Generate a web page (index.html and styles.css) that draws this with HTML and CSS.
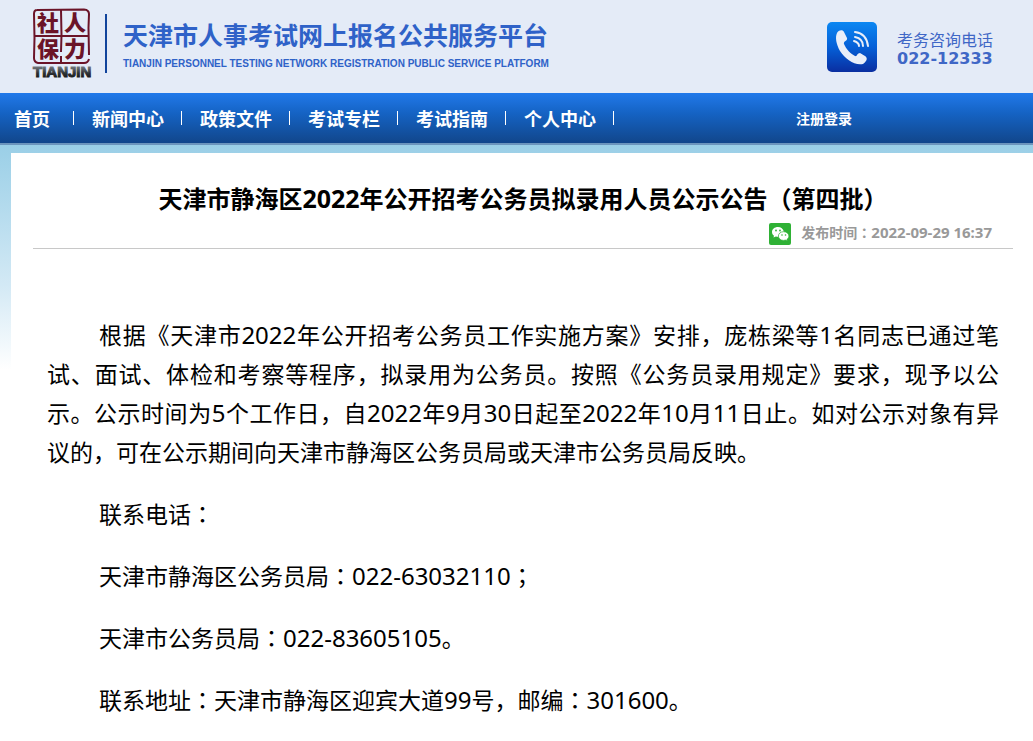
FILE: index.html
```html
<!DOCTYPE html>
<html lang="zh-CN">
<head>
  <meta charset="UTF-8">
  <meta name="viewport" content="width=device-width, initial-scale=1.0">
  <title>天津市人事考试网上报名公共服务平台</title>
  <link rel="stylesheet" href="styles.css">
</head>
<body>

  <!-- Header -->
  <header class="header">
    <svg class="logo" width="60" height="72" viewBox="0 0 60 72">
      <defs>
        <linearGradient id="ink" x1="0" y1="0" x2="0" y2="1">
          <stop offset="0" stop-color="#9a9fa6"/>
          <stop offset="0.6" stop-color="#2c3033"/>
          <stop offset="1" stop-color="#111"/>
        </linearGradient>
      </defs>
      <g fill="none" stroke="#6b1428" stroke-width="2">
        <path d="M5 2 L52 1.5 Q57 2 57 6 L56.5 20 L57 47 M57 51 Q56 55 52 55 L6 55 Q2 54 2 50 L2.5 30 L2 6 Q2 2 5 2"/>
        <path d="M29 2 L29.5 27 L29 44 M29 48 V55 M2 28 H57"/>
      </g>
      <g class="seal-text">
        <text x="5" y="23">社</text>
        <text x="32" y="23">人</text>
        <text x="5" y="49">保</text>
        <text x="32" y="49">力</text>
      </g>
      <text class="seal-name" x="1" y="69" fill="url(#ink)" stroke="url(#ink)">TIANJIN</text>
    </svg>
    <div class="site-name">
      <h1>天津市人事考试网上报名公共服务平台</h1>
      <p>TIANJIN PERSONNEL TESTING NETWORK REGISTRATION PUBLIC SERVICE PLATFORM</p>
    </div>
    <div class="hotline">
      <svg width="50" height="50" viewBox="0 0 50 50">
        <defs>
          <linearGradient id="tile" x1="0" y1="0" x2="0" y2="1">
            <stop offset="0" stop-color="#0b87f2"/>
            <stop offset="0.5" stop-color="#0560d8"/>
            <stop offset="1" stop-color="#0a2ea0"/>
          </linearGradient>
        </defs>
        <rect width="50" height="50" rx="5" fill="url(#tile)"/>
        <path d="M10 11 C11 8 16 7 17 10 L20 16 C21 19 16 19 17 22 C19 27 24 32 28 34 C30 35 30 31 33 31 L38 34 C41 36 40 39 36 42 C28 44 18 37 13 29 C9 22 8 15 10 11 Z" fill="#e9eef9"/>
        <g fill="none" stroke="#e9eef9" stroke-width="2" stroke-linecap="round">
          <path d="M28 10 C36 11 40 16 41 24"/>
          <path d="M28 15 C33 16 36 19 36 24"/>
          <path d="M27 19 C30 20 32 22 32 24"/>
        </g>
      </svg>
      <div class="hotline-text">
        <span>考务咨询电话</span>
        <strong>022-12333</strong>
      </div>
    </div>
  </header>

  <!-- Navigation -->
  <nav class="nav">
    <ul>
      <li class="home"><a href="#">首页</a></li>
      <li><a href="#">新闻中心</a></li>
      <li><a href="#">政策文件</a></li>
      <li><a href="#">考试专栏</a></li>
      <li><a href="#">考试指南</a></li>
      <li><a href="#">个人中心</a></li>
    </ul>
    <a class="login" href="#">注册登录</a>
  </nav>

  <!-- Article -->
  <div class="page">
    <main class="article">
      <div class="article-head">
        <h2>天津市静海区<span class="num">2022</span>年公开招考公务员拟录用人员公示公告（第四批）</h2>
        <div class="meta">
          <svg width="22" height="22" viewBox="0 0 22 22">
            <rect width="22" height="22" rx="2" fill="#2fb135"/>
            <path d="M9 4 C5.500 4 3 6.200 3 9 C3 10.600 3.800 11.900 5 12.800 L4.500 14.600 L6.800 13.600 L10 14 C14 13.500 15 11 14.800 8.500 C14.200 5.800 12 4 9 4 Z" fill="#fff"/>
            <path d="M14.500 8.700 C11.500 8.700 9.400 10.700 9.400 13 C9.400 15.400 11.600 17.400 14.500 17.400 L16.500 17.100 L18.300 18 L17.900 16.400 C19.200 15.600 19.900 14.400 19.900 13 C19.900 10.700 17.600 8.700 14.500 8.700 Z" fill="#fff" stroke="#2fb135" stroke-width="0.700"/>
            <g fill="#2fb135">
              <circle cx="7" cy="7.500" r="0.900"/>
              <circle cx="11" cy="7.500" r="0.900"/>
              <circle cx="13" cy="12" r="0.800"/>
              <circle cx="16.500" cy="12" r="0.800"/>
            </g>
          </svg>
          <span class="time">发布时间<span class="mark" lang="ja">：</span><span class="num">2022-09-29 16:37</span></span>
        </div>
      </div>
      <div class="article-body">
        <p>根据《天津市<span class="num">2022</span>年公开招考公务员工作实施方案》安排，庞栋梁等<span class="num">1</span>名同志已通过笔试、面试、体检和考察等程序，拟录用为公务员。按照《公务员录用规定》要求，现予以公示。公示时间为<span class="num">5</span>个工作日，自<span class="num">2022</span>年<span class="num">9</span>月<span class="num">30</span>日起至<span class="num">2022</span>年<span class="num">10</span>月<span class="num">11</span>日止。如对公示对象有异议的，可在公示期间向天津市静海区公务员局或天津市公务员局反映。</p>
        <p>联系电话<span class="mark" lang="ja">：</span></p>
        <p>天津市静海区公务员局<span class="mark" lang="ja">：</span><span class="num">022-63032110</span><span class="mark" lang="ja">；</span></p>
        <p>天津市公务员局<span class="mark" lang="ja">：</span><span class="num">022-83605105</span>。</p>
        <p>联系地址<span class="mark" lang="ja">：</span>天津市静海区迎宾大道<span class="num">99</span>号，邮编<span class="mark" lang="ja">：</span><span class="num">301600</span>。</p>
      </div>
    </main>
  </div>

</body>
</html>
```
FILE: styles.css
```css
* {
  box-sizing: border-box;
}

body {
  margin: 0;
  background: #fff;
  color: #000;
  font-family: "Noto Sans CJK SC", sans-serif;
}

h1, h2, p, ul {
  margin: 0;
  padding: 0;
}

a {
  color: inherit;
  text-decoration: none;
}

svg {
  display: block;
  flex-shrink: 0;
}

/* digits and full-width colons */
.num {
  font-family: "Noto Sans", sans-serif;
}

.mark {
  font-family: "Noto Sans CJK JP", sans-serif;
}

/* Header */
.header {
  display: flex;
  align-items: flex-start;
  height: 93px;
  padding: 8px 41px 0 32px;
  background: #e4ebf7;
}

.logo {
  overflow: visible;
}

.seal-text {
  fill: #6b1428;
  font-size: 22px;
  font-weight: 900;
}

.seal-name {
  font-family: "Liberation Sans", Arial, sans-serif;
  font-size: 15px;
  font-weight: bold;
}

.site-name {
  height: 59px;
  margin: 6px 0 0 13px;
  padding-left: 16px;
  border-left: 2px solid #11449c;
  color: #2f62c8;
  white-space: nowrap;
}

.site-name h1 {
  font-size: 25px;
  font-weight: bold;
  line-height: 40px;
}

.site-name p {
  padding-top: 2px;
  font-family: "Liberation Sans", Arial, sans-serif;
  font-size: 10px;
  font-weight: bold;
  line-height: 16px;
}

.hotline {
  display: flex;
  gap: 20px;
  margin: 14px 0 0 auto;
  color: #3f67c6;
  white-space: nowrap;
}

.hotline-text {
  display: flex;
  flex-direction: column;
  width: 95px;
  padding-top: 7px;
  font-size: 16px;
  line-height: 20px;
}

.hotline-text strong {
  font-family: "DejaVu Sans", sans-serif;
  font-size: 16px;
}

/* Navigation */
.nav {
  display: flex;
  align-items: center;
  height: 52px;
  padding-left: 14px;
  border-bottom: 2px solid #6c95bd;
  background: linear-gradient(#2179ea, #1563c4 40%, #11468b);
  color: #fff;
  font-weight: bold;
  white-space: nowrap;
}

.nav ul {
  display: flex;
  list-style: none;
  font-size: 18px;
  line-height: 26px;
}

.nav li {
  display: flex;
  align-items: center;
  gap: 17px;
  margin-right: 18px;
}

.nav li.home {
  gap: 23px;
}

.nav li::after {
  content: "";
  width: 1px;
  height: 14px;
  background: #fff;
}

.login {
  margin-left: 164px;
  font-size: 14px;
}

/* Article */
.page {
  padding: 8px 0 0 11px;
  background: linear-gradient(#9acfe7, #d3e9f5 140px, #fff 225px);
}

.article {
  padding: 28px 20px 20px 22px;
  background: #fff;
}

.article-head {
  border-bottom: 1px solid #c8c8c8;
}

.article-head h2 {
  font-size: 24px;
  line-height: 34px;
  text-align: center;
}

.article-head h2 .num {
  font-size: 25px;
}

.meta {
  display: flex;
  justify-content: flex-end;
  align-items: flex-start;
  gap: 10px;
  padding: 8px 21px 3px 0;
  color: #999;
  font-size: 14px;
  font-weight: bold;
}

.meta .time {
  line-height: 18px;
}

.meta .num {
  font-size: 15px;
}

.article-body {
  padding: 66px 14px 0;
  font-size: 23px;
  line-height: 39px;
}

.article-body p {
  margin-bottom: 23px;
  text-align: justify;
  text-indent: 52px;
}

.article-body .num {
  font-size: 24px;
}
```
